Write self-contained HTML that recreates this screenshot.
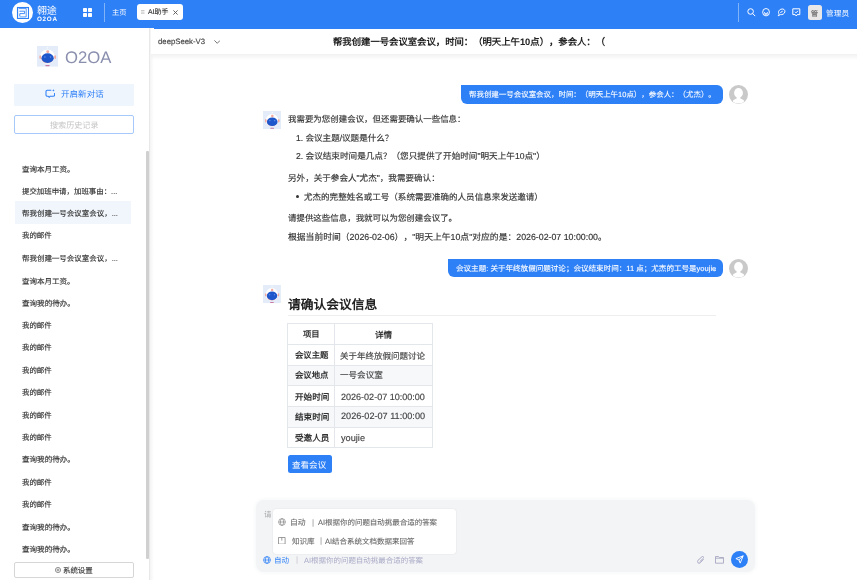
<!DOCTYPE html><html lang="zh-CN"><head><meta charset="utf-8"><style>
*{box-sizing:border-box;margin:0;padding:0}
html,body{text-spacing-trim:space-all;text-rendering:geometricPrecision;width:857px;height:580px;overflow:hidden;background:#fff;font-family:"Liberation Sans",sans-serif;color:#333}
.abs{position:absolute}svg{display:block}.t{position:absolute;white-space:nowrap;line-height:1;will-change:transform}
</style></head><body>

<div class="abs" style="left:0;top:0;width:857px;height:28.5px;background:#2e80f6"></div>
<div class="abs" style="left:12px;top:2px;width:21.2px;height:21.2px;border-radius:50%;background:#fff"></div>
<svg class="abs" style="left:16px;top:6px" width="13" height="13" viewBox="0 0 13 13"><g fill="none" stroke="#2e80f6"><rect x="1.55" y="1.55" width="11" height="11" stroke-width="1.2"/><path d="M2.9 2.6H10.2V10.9H3.4" stroke-width=".8"/><path d="M3.4 5.2H8.6V7.6H3.8V10" stroke-width=".9"/></g></svg>
<svg class="abs" style="left:82.6px;top:8.4px" width="9" height="9" viewBox="0 0 9 9"><g fill="#fff"><rect x="0" y="0" width="4" height="4" rx=".7"/><rect x="5" y="0" width="4" height="4" rx=".7"/><rect x="0" y="5" width="4" height="4" rx=".7"/><rect x="5" y="5" width="4" height="4" rx=".7"/></g></svg>
<div class="abs" style="left:104px;top:3px;width:1px;height:19px;background:rgba(255,255,255,.4)"></div>
<div class="abs" style="left:137px;top:4.3px;width:46px;height:16.1px;border-radius:3px;background:#fff"></div>
<svg class="abs" style="left:141.2px;top:10.2px" width="3.5" height="4.2" viewBox="0 0 3.5 4.2"><g fill="#c4c4c4"><rect x="0" y="0" width="3.5" height=".9"/><rect x="0" y="1.65" width="3.5" height=".9"/><rect x="0" y="3.3" width="3.5" height=".9"/></g></svg>
<svg class="abs" style="left:172.7px;top:10px" width="5" height="5" viewBox="0 0 5 5"><path d="M.4 .4l4.2 4.2M4.6 .4L.4 4.6" stroke="#555" stroke-width=".9"/></svg>
<div class="abs" style="left:738px;top:3px;width:1px;height:19px;background:rgba(255,255,255,.4)"></div>
<svg class="abs" style="left:746.5px;top:7.8px" width="9" height="9" viewBox="0 0 9 9"><g fill="none" stroke="#fff" stroke-width="1"><circle cx="3.6" cy="3.5" r="2.8"/><path d="M5.6 5.5l2.6 2.6"/></g></svg>
<svg class="abs" style="left:761.8px;top:8.2px" width="8.2" height="8.4" viewBox="0 0 8.2 8.4"><g fill="none" stroke="#fff" stroke-width=".95"><ellipse cx="4.05" cy="4.2" rx="3.4" ry="3.7"/><path d="M2.4 4.1l.8 2.7.85-1.9.85 1.9.8-2.7" stroke-width=".8"/></g></svg>
<svg class="abs" style="left:777px;top:8.1px" width="8.5" height="9" viewBox="0 0 8.5 9"><g fill="none" stroke="#fff" stroke-width="1"><path d="M1.2 7.8l1-1.6C.8 4.5 1.6 2 4 1.2s4.2.6 3.9 2.6S5.2 7 3.4 6.6z"/><path d="M3.3 4.6l2.4-1.4"/></g></svg>
<svg class="abs" style="left:792px;top:8.1px" width="8.5" height="9" viewBox="0 0 8.5 9"><g fill="none" stroke="#fff" stroke-width="1"><path d="M.8 .8h7v5.8H5.2L4.2 8 3.2 6.6H.8z"/><path d="M3 3.8l1 1 2-2"/></g></svg>
<div class="abs" style="left:807.7px;top:5px;width:14.5px;height:14.9px;border-radius:2.5px;background:#e8e8e8"></div>

<div class="abs" style="left:0;top:28px;width:149px;height:552px;background:#fff"></div>
<div class="abs" style="left:149px;top:28px;width:1px;height:552px;background:#e8e8e8"></div>
<div class="abs" style="left:150px;top:28px;width:4px;height:552px;background:linear-gradient(90deg,#f4f4f4,#fff)"></div>
<div class="abs" style="left:37px;top:46px"><svg width="21" height="20.6" viewBox="0 0 18.2 18.2" preserveAspectRatio="none"><rect width="18.2" height="18.2" fill="#e3ecf8"/><circle cx="9" cy="9.4" r="6.3" fill="#fff"/><circle cx="9.2" cy="1.6" r=".6" fill="#fff"/><rect x="8.1" y="3.7" width="2.4" height="2.5" rx="1" fill="#f2a9a0"/><ellipse cx="2.8" cy="9.8" rx=".8" ry="1.7" fill="#f3a69c"/><ellipse cx="15.7" cy="9.8" rx=".8" ry="1.7" fill="#f3a69c"/><ellipse cx="8.9" cy="11.2" rx="5.1" ry="4.1" fill="#f0b5b5"/><ellipse cx="9.2" cy="10.75" rx="5.3" ry="4.3" fill="#1e57cb"/><rect x="6.2" y="9.2" width="1.3" height="1" rx=".4" fill="#7aa5f2"/><rect x="11" y="9.2" width="1.3" height="1" rx=".4" fill="#7aa5f2"/><rect x="7.2" y="16.8" width="3.8" height="1" rx=".5" fill="#c77aa6"/></svg></div>
<div class="abs" style="left:14.3px;top:83.5px;width:119.5px;height:22.2px;background:#eff5fd;border-radius:1px"></div>
<svg class="abs" style="left:44.9px;top:89.4px" width="9.8" height="8.8" viewBox="0 0 9.8 8.8"><path d="M6.3 1.3H2.3A1.3 1.3 0 0 0 1 2.6v3.3a1.3 1.3 0 0 0 1.3 1.3h.9l1 1.1 1-1.1h3.1a1.3 1.3 0 0 0 1.3-1.3V3.9" fill="none" stroke="#2e80f6" stroke-width="1.05"/><path d="M8.4 0l.35 1.05L9.8 1.4l-1.05.35L8.4 2.8l-.35-1.05L7 1.4l1.05-.35z" fill="#2e80f6"/></svg>
<div class="abs" style="left:14.3px;top:115.2px;width:119.5px;height:18.6px;border:1px solid #a6c8fa;border-radius:2px"></div>
<div class="abs" style="left:14.7px;top:201.2px;width:116.3px;height:22.4px;background:#f1f6fc"></div>
<div class="abs" style="left:145.9px;top:150.9px;width:3px;height:408px;background:#d0d0d0;border-radius:1px"></div>
<div class="abs" style="left:14.4px;top:562.2px;width:119.5px;height:16.2px;border:1px solid #d6d6d6;border-radius:2px;background:#fff"></div>
<svg class="abs" style="left:55px;top:566.5px" width="6" height="6" viewBox="0 0 6 6"><g fill="none" stroke="#666" stroke-width=".7"><circle cx="3" cy="3" r="2.6"/><circle cx="3" cy="3" r="1"/></g></svg>

<div class="abs" style="left:150.6px;top:28.5px;width:707px;height:26px;background:#fff"></div>
<div class="abs" style="left:150.6px;top:54.4px;width:707px;height:6px;background:linear-gradient(#f1f1f1,rgba(255,255,255,0))"></div>
<svg class="abs" style="left:213.6px;top:40.4px" width="6.5" height="3.8" viewBox="0 0 6.5 3.8"><path d="M.4 .4l2.85 2.9L6.1 .4" fill="none" stroke="#666" stroke-width=".9"/></svg>

<div class="abs" style="left:460.8px;top:84.7px;width:262.2px;height:19px;background:#2e80f6;border-radius:0 6px 6px 6px"></div>
<div class="abs" style="left:728.9px;top:84.7px"><svg width="19" height="19" viewBox="0 0 19 19"><defs><clipPath id="avc"><circle cx="9.5" cy="9.5" r="9.1"/></clipPath></defs><circle cx="9.5" cy="9.5" r="9.5" fill="#c9c9c9"/><g clip-path="url(#avc)" fill="#fff"><ellipse cx="9.5" cy="7.9" rx="4.4" ry="4.9"/><ellipse cx="9.5" cy="19.5" rx="7" ry="6.3"/><rect x="7.6" y="11" width="3.8" height="3"/></g></svg></div>
<div class="abs" style="left:263px;top:111.1px"><svg width="18.3" height="18.1" viewBox="0 0 18.2 18.2" preserveAspectRatio="none"><rect width="18.2" height="18.2" fill="#e3ecf8"/><circle cx="9" cy="9.4" r="6.3" fill="#fff"/><circle cx="9.2" cy="1.6" r=".6" fill="#fff"/><rect x="8.1" y="3.7" width="2.4" height="2.5" rx="1" fill="#f2a9a0"/><ellipse cx="2.8" cy="9.8" rx=".8" ry="1.7" fill="#f3a69c"/><ellipse cx="15.7" cy="9.8" rx=".8" ry="1.7" fill="#f3a69c"/><ellipse cx="8.9" cy="11.2" rx="5.1" ry="4.1" fill="#f0b5b5"/><ellipse cx="9.2" cy="10.75" rx="5.3" ry="4.3" fill="#1e57cb"/><rect x="6.2" y="9.2" width="1.3" height="1" rx=".4" fill="#7aa5f2"/><rect x="11" y="9.2" width="1.3" height="1" rx=".4" fill="#7aa5f2"/><rect x="7.2" y="16.8" width="3.8" height="1" rx=".5" fill="#c77aa6"/></svg></div>
<div class="abs" style="left:295.6px;top:194.7px;width:3px;height:3px;border-radius:50%;background:#333"></div>
<div class="abs" style="left:448px;top:258.5px;width:275.1px;height:18.3px;background:#2e80f6;border-radius:0 6px 6px 6px"></div>
<div class="abs" style="left:729px;top:258.5px"><svg width="19" height="19" viewBox="0 0 19 19"><defs><clipPath id="avc"><circle cx="9.5" cy="9.5" r="9.1"/></clipPath></defs><circle cx="9.5" cy="9.5" r="9.5" fill="#c9c9c9"/><g clip-path="url(#avc)" fill="#fff"><ellipse cx="9.5" cy="7.9" rx="4.4" ry="4.9"/><ellipse cx="9.5" cy="19.5" rx="7" ry="6.3"/><rect x="7.6" y="11" width="3.8" height="3"/></g></svg></div>
<div class="abs" style="left:263.2px;top:284.6px"><svg width="17.9" height="18.3" viewBox="0 0 18.2 18.2" preserveAspectRatio="none"><rect width="18.2" height="18.2" fill="#e3ecf8"/><circle cx="9" cy="9.4" r="6.3" fill="#fff"/><circle cx="9.2" cy="1.6" r=".6" fill="#fff"/><rect x="8.1" y="3.7" width="2.4" height="2.5" rx="1" fill="#f2a9a0"/><ellipse cx="2.8" cy="9.8" rx=".8" ry="1.7" fill="#f3a69c"/><ellipse cx="15.7" cy="9.8" rx=".8" ry="1.7" fill="#f3a69c"/><ellipse cx="8.9" cy="11.2" rx="5.1" ry="4.1" fill="#f0b5b5"/><ellipse cx="9.2" cy="10.75" rx="5.3" ry="4.3" fill="#1e57cb"/><rect x="6.2" y="9.2" width="1.3" height="1" rx=".4" fill="#7aa5f2"/><rect x="11" y="9.2" width="1.3" height="1" rx=".4" fill="#7aa5f2"/><rect x="7.2" y="16.8" width="3.8" height="1" rx=".5" fill="#c77aa6"/></svg></div>
<div class="abs" style="left:287.7px;top:315px;width:428px;height:1px;background:#edeef0"></div>
<div class="abs" style="left:287.5px;top:365.0px;width:145.2px;height:20.600000000000023px;background:#f6f8fa"></div><div class="abs" style="left:287.5px;top:406.5px;width:145.2px;height:20.5px;background:#f6f8fa"></div><div class="abs" style="left:287.5px;top:322.9px;width:145.7px;height:1px;background:#e3e6ea"></div><div class="abs" style="left:287.5px;top:343.8px;width:145.7px;height:1px;background:#e3e6ea"></div><div class="abs" style="left:287.5px;top:364.5px;width:145.7px;height:1px;background:#e3e6ea"></div><div class="abs" style="left:287.5px;top:385.1px;width:145.7px;height:1px;background:#e3e6ea"></div><div class="abs" style="left:287.5px;top:406.0px;width:145.7px;height:1px;background:#e3e6ea"></div><div class="abs" style="left:287.5px;top:426.5px;width:145.7px;height:1px;background:#e3e6ea"></div><div class="abs" style="left:287.5px;top:446.7px;width:145.7px;height:1px;background:#e3e6ea"></div><div class="abs" style="left:287.0px;top:322.9px;width:1px;height:124.80000000000001px;background:#e3e6ea"></div><div class="abs" style="left:334.0px;top:322.9px;width:1px;height:124.80000000000001px;background:#e3e6ea"></div><div class="abs" style="left:432.2px;top:322.9px;width:1px;height:124.80000000000001px;background:#e3e6ea"></div>
<div class="abs" style="left:287.5px;top:455.2px;width:44.2px;height:17.8px;background:#2e80f6;border-radius:2.5px"></div>
<div class="abs" style="left:255.6px;top:500px;width:499.8px;height:71.5px;background:#f3f4f6;border-radius:8px;box-shadow:0 0 3px 2px #f9fafb"></div>
<div class="abs" style="left:272.7px;top:508.6px;width:183.3px;height:45.3px;background:#fff;border-radius:3px;box-shadow:0 0 1.5px rgba(0,0,0,.13)"></div>
<div class="abs" style="left:278.2px;top:517.7px"><svg width="8" height="8" viewBox="0 0 8 8"><g fill="none" stroke="#777" stroke-width="0.6"><circle cx="4" cy="4" r="3.4"/><ellipse cx="4" cy="4" rx="1.6" ry="3.4"/><path d="M.6 4h6.8"/></g></svg></div>
<svg class="abs" style="left:278.4px;top:536.6px" width="7.6" height="7.6" viewBox="0 0 8 8"><g fill="none" stroke="#777" stroke-width=".75"><path d="M.5 .5h7v7h-7z"/><path d="M4 .5v3.3"/></g></svg>
<div class="abs" style="left:262.9px;top:556px"><svg width="8" height="8" viewBox="0 0 8 8"><g fill="none" stroke="#2e80f6" stroke-width="0.75"><circle cx="4" cy="4" r="3.4"/><ellipse cx="4" cy="4" rx="1.6" ry="3.4"/><path d="M.6 4h6.8"/></g></svg></div>
<svg class="abs" style="left:696.5px;top:555.5px" width="7.5" height="8.2" viewBox="0 0 7.5 8.2"><path d="M6.6 3.2L3.3 6.7a1.6 1.6 0 0 1-2.4-2.3L4.9 .8a1 1 0 0 1 1.5 1.4L2.7 5.8" fill="none" stroke="#a7a8c2" stroke-width="1"/></svg>
<svg class="abs" style="left:714.9px;top:556px" width="9" height="7.7" viewBox="0 0 9 7.7"><path d="M.5 .5h3l.9 1h4.1v5.7h-8z M.5 2.2h8" fill="none" stroke="#a7a8c2" stroke-width=".9"/></svg>
<div class="abs" style="left:730.8px;top:551px;width:17.4px;height:17.4px;border-radius:50%;background:#2e80f6"></div>
<svg class="abs" style="left:735.2px;top:555.3px" width="9" height="9" viewBox="0 0 9 9"><path d="M8.2 .8L.9 3.6l3 1.3 1.3 3.2z M8.2 .8L3.9 4.9" fill="none" stroke="#fff" stroke-width=".95" stroke-linejoin="round"/></svg>

<div class="t" id="logo_cn" style="left:37.00px;top:6.80px;font-size:10px;color:#fff;letter-spacing:-0.360px">翱途</div>
<div class="t" id="logo_en" style="left:37.00px;top:17.40px;font-size:6.3px;color:#fff;letter-spacing:0.700px;font-weight:700">O2OA</div>
<div class="t" id="home" style="left:112.00px;top:9.20px;font-size:7.312px;color:#fff">主页</div>
<div class="t" id="tab" style="left:148.00px;top:10.20px;font-size:6.88px;color:#333;-webkit-text-stroke:0.15px currentColor"><span style="letter-spacing:0px">AI</span>助手</div>
<div class="t" id="adm_av" style="left:811.30px;top:10.50px;font-size:7.064px;color:#666;-webkit-text-stroke:0.15px currentColor">管</div>
<div class="t" id="admin" style="left:826.40px;top:10.00px;font-size:7.704px;color:#fff">管理员</div>
<div class="t" id="o2oa" style="left:64.60px;top:49.60px;font-size:16.694px;color:#8a8fae">O2OA</div>
<div class="t" id="newchat" style="left:61.40px;top:89.80px;font-size:8.562px;color:#2e80f6">开启新对话</div>
<div class="t" id="search" style="left:50.20px;top:121.90px;font-size:8.091px;color:#c4c4c4">搜索历史记录</div>
<div class="t" id="settings" style="left:63.10px;top:566.90px;font-size:7.441px;color:#444;-webkit-text-stroke:0.15px currentColor">系统设置</div>
<div class="t" id="model" style="left:158.40px;top:38.20px;font-size:7.785px;color:#444;-webkit-text-stroke:0.15px currentColor">deepSeek-V3</div>
<div class="t" id="title" style="left:333.00px;top:38.20px;font-size:9.353px;color:#222;font-weight:700">帮我创建一号会议室会议，时间：（明天上午<span style="letter-spacing:0px">10</span>点），参会人：（</div>
<div class="t" id="bub1" style="left:469.00px;top:91.40px;font-size:7.469px;color:#fff;-webkit-text-stroke:0.1px currentColor">帮我创建一号会议室会议，时间：（明天上午<span style="letter-spacing:0px">10</span>点），参会人：（尤杰）。</div>
<div class="t" id="bub2" style="left:456.00px;top:264.80px;font-size:7.555px;color:#fff;-webkit-text-stroke:0.1px currentColor">会议主题<span style="letter-spacing:0px">: </span>关于年终放假问题讨论；会议结束时间：<span style="letter-spacing:0px">11 </span>点；尤杰的工号是<span style="letter-spacing:0px">youjie</span></div>
<div class="t" id="L1" style="left:287.60px;top:115.40px;font-size:8.469px;color:#333;-webkit-text-stroke:0.15px currentColor">我需要为您创建会议，但还需要确认一些信息：</div>
<div class="t" id="L2" style="left:295.50px;top:134.20px;font-size:8.552px;color:#333;-webkit-text-stroke:0.15px currentColor"><span style="letter-spacing:0px">1. </span>会议主题<span style="letter-spacing:0px">/</span>议题是什么？</div>
<div class="t" id="L3" style="left:295.50px;top:151.60px;font-size:8.606px;color:#333;-webkit-text-stroke:0.15px currentColor"><span style="letter-spacing:0px">2. </span>会议结束时间是几点？（您只提供了开始时间<span style="letter-spacing:0px">"</span>明天上午<span style="letter-spacing:0px">10</span>点<span style="letter-spacing:0px">"</span>）</div>
<div class="t" id="L4" style="left:287.60px;top:173.60px;font-size:8.576px;color:#333;-webkit-text-stroke:0.15px currentColor">另外，关于参会人<span style="letter-spacing:0px">"</span>尤杰<span style="letter-spacing:0px">"</span>，我需要确认：</div>
<div class="t" id="L5" style="left:304.10px;top:192.50px;font-size:8.545px;color:#333;-webkit-text-stroke:0.15px currentColor">尤杰的完整姓名或工号（系统需要准确的人员信息来发送邀请）</div>
<div class="t" id="L6" style="left:287.60px;top:214.10px;font-size:8.469px;color:#333;-webkit-text-stroke:0.15px currentColor">请提供这些信息，我就可以为您创建会议了。</div>
<div class="t" id="L7" style="left:287.60px;top:233.00px;font-size:8.815px;color:#333;-webkit-text-stroke:0.15px currentColor">根据当前时间（<span style="letter-spacing:0px">2026-02-06</span>），<span style="letter-spacing:0px">"</span>明天上午<span style="letter-spacing:0px">10</span>点<span style="letter-spacing:0px">"</span>对应的是：<span style="letter-spacing:0px">2026-02-07 10:00:00</span>。</div>
<div class="t" id="heading" style="left:287.60px;top:298.80px;font-size:12.748px;color:#222;font-weight:700">请确认会议信息</div>
<div class="t" id="th1" style="left:303.40px;top:330.00px;font-size:8.365px;color:#333;font-weight:700">项目</div>
<div class="t" id="th2" style="left:375.00px;top:330.80px;font-size:8.585px;color:#333;font-weight:700">详情</div>
<div class="t" id="r1a" style="left:294.60px;top:351.10px;font-size:8.371px;color:#333;font-weight:700">会议主题</div>
<div class="t" id="r1b" style="left:340.30px;top:351.50px;font-size:8.508px;color:#444;-webkit-text-stroke:0.15px currentColor">关于年终放假问题讨论</div>
<div class="t" id="r2a" style="left:294.60px;top:371.40px;font-size:8.373px;color:#333;font-weight:700">会议地点</div>
<div class="t" id="r2b" style="left:340.30px;top:371.40px;font-size:8.562px;color:#444;-webkit-text-stroke:0.15px currentColor">一号会议室</div>
<div class="t" id="r3a" style="left:294.60px;top:393.00px;font-size:8.571px;color:#333;font-weight:700">开始时间</div>
<div class="t" id="r3b" style="left:341.20px;top:392.60px;font-size:9.048px;color:#444;-webkit-text-stroke:0.15px currentColor">2026-02-07 10:00:00</div>
<div class="t" id="r4a" style="left:294.60px;top:412.90px;font-size:8.571px;color:#333;font-weight:700">结束时间</div>
<div class="t" id="r4b" style="left:341.20px;top:412.30px;font-size:9.148px;color:#444;-webkit-text-stroke:0.15px currentColor">2026-02-07 11:00:00</div>
<div class="t" id="r5a" style="left:294.60px;top:433.80px;font-size:8.571px;color:#333;font-weight:700">受邀人员</div>
<div class="t" id="r5b" style="left:341.20px;top:433.80px;font-size:9.204px;color:#444;-webkit-text-stroke:0.15px currentColor">youjie</div>
<div class="t" id="btn" style="left:292.30px;top:460.50px;font-size:8.557px;color:#fff">查看会议</div>
<div class="t" id="ph" style="left:263.60px;top:510.70px;font-size:7.5px;color:#a8a8a8">请</div>
<div class="t" id="p1a" style="left:290.30px;top:519.30px;font-size:7.825px;color:#666;-webkit-text-stroke:0.08px currentColor">自动</div>
<div class="t" id="p1b" style="left:312.00px;top:518.50px;font-size:8px;color:#888">|</div>
<div class="t" id="p1c" style="left:318.00px;top:519.10px;font-size:7.488px;color:#666;-webkit-text-stroke:0.08px currentColor"><span style="letter-spacing:0px">AI</span>根据你的问题自动挑最合适的答案</div>
<div class="t" id="p2a" style="left:291.50px;top:537.60px;font-size:7.571px;color:#666;-webkit-text-stroke:0.08px currentColor">知识库</div>
<div class="t" id="p2b" style="left:319.50px;top:537.00px;font-size:8px;color:#888">|</div>
<div class="t" id="p2c" style="left:325.10px;top:537.60px;font-size:7.511px;color:#666;-webkit-text-stroke:0.08px currentColor"><span style="letter-spacing:0px">AI</span>结合系统文档数据来回答</div>
<div class="t" id="b1" style="left:274.00px;top:556.60px;font-size:7.562px;color:#2e80f6">自动</div>
<div class="t" id="b2" style="left:296.30px;top:556.00px;font-size:8px;color:#c4c4cc">|</div>
<div class="t" id="b3" style="left:304.40px;top:556.60px;font-size:7.487px;color:#a9aac6"><span style="letter-spacing:0px">AI</span>根据你的问题自动挑最合适的答案</div>
<div class="t" id="li0" style="left:22.00px;top:165.60px;font-size:7.508px;color:#333;-webkit-text-stroke:0.15px currentColor">查询本月工资。</div>
<div class="t" id="li1" style="left:22.00px;top:187.60px;font-size:7.436px;color:#333;-webkit-text-stroke:0.15px currentColor">提交加班申请，加班事由：<span style="letter-spacing:0px">...</span></div>
<div class="t" id="li2" style="left:22.00px;top:210.00px;font-size:7.471px;color:#333;-webkit-text-stroke:0.15px currentColor">帮我创建一号会议室会议，<span style="letter-spacing:0px">...</span></div>
<div class="t" id="li3" style="left:22.00px;top:232.40px;font-size:7.452px;color:#333;-webkit-text-stroke:0.15px currentColor">我的邮件</div>
<div class="t" id="li4" style="left:22.00px;top:254.80px;font-size:7.471px;color:#333;-webkit-text-stroke:0.15px currentColor">帮我创建一号会议室会议，<span style="letter-spacing:0px">...</span></div>
<div class="t" id="li5" style="left:22.00px;top:277.60px;font-size:7.508px;color:#333;-webkit-text-stroke:0.15px currentColor">查询本月工资。</div>
<div class="t" id="li6" style="left:22.00px;top:299.60px;font-size:7.576px;color:#333;-webkit-text-stroke:0.15px currentColor">查询我的待办。</div>
<div class="t" id="li7" style="left:22.00px;top:322.00px;font-size:7.452px;color:#333;-webkit-text-stroke:0.15px currentColor">我的邮件</div>
<div class="t" id="li8" style="left:22.00px;top:344.40px;font-size:7.452px;color:#333;-webkit-text-stroke:0.15px currentColor">我的邮件</div>
<div class="t" id="li9" style="left:22.00px;top:366.80px;font-size:7.452px;color:#333;-webkit-text-stroke:0.15px currentColor">我的邮件</div>
<div class="t" id="li10" style="left:22.00px;top:389.20px;font-size:7.452px;color:#333;-webkit-text-stroke:0.15px currentColor">我的邮件</div>
<div class="t" id="li11" style="left:22.00px;top:411.60px;font-size:7.452px;color:#333;-webkit-text-stroke:0.15px currentColor">我的邮件</div>
<div class="t" id="li12" style="left:22.00px;top:434.00px;font-size:7.452px;color:#333;-webkit-text-stroke:0.15px currentColor">我的邮件</div>
<div class="t" id="li13" style="left:22.00px;top:456.40px;font-size:7.576px;color:#333;-webkit-text-stroke:0.15px currentColor">查询我的待办。</div>
<div class="t" id="li14" style="left:22.00px;top:478.80px;font-size:7.452px;color:#333;-webkit-text-stroke:0.15px currentColor">我的邮件</div>
<div class="t" id="li15" style="left:22.00px;top:501.20px;font-size:7.452px;color:#333;-webkit-text-stroke:0.15px currentColor">我的邮件</div>
<div class="t" id="li16" style="left:22.00px;top:523.60px;font-size:7.576px;color:#333;-webkit-text-stroke:0.15px currentColor">查询我的待办。</div>
<div class="t" id="li17" style="left:22.00px;top:546.00px;font-size:7.576px;color:#333;-webkit-text-stroke:0.15px currentColor">查询我的待办。</div>
</body></html>
